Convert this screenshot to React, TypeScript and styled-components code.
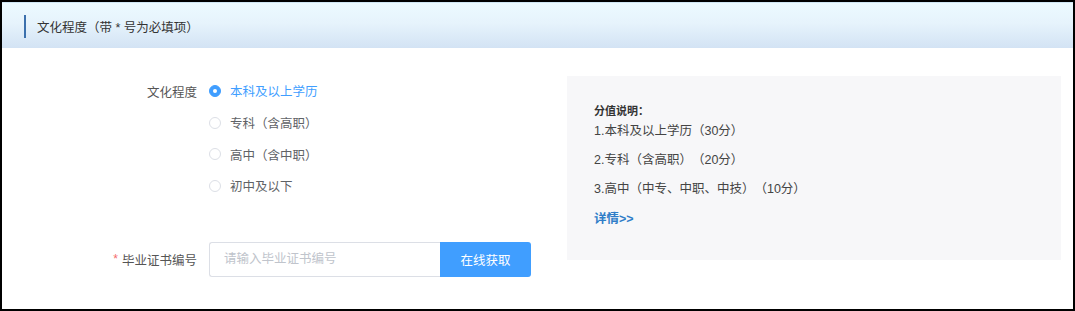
import styled, { createGlobalStyle } from "styled-components";

const GlobalStyle = createGlobalStyle`
  html, body {
    margin: 0;
    padding: 0;
    background: #ffffff;
  }
  * {
    box-sizing: border-box;
  }
  body {
    font-family: "Liberation Sans", "Noto Sans CJK SC", sans-serif;
    text-spacing-trim: space-all;
  }
`;

const options = ["本科及以上学历", "专科（含高职）", "高中（含中职）", "初中及以下"];

const scores = [
  "1.本科及以上学历（30分）",
  "2.专科（含高职）（20分）",
  "3.高中（中专、中职、中技）（10分）",
];

const App: React.FC = () => {
  const selected = 0;

  return (
    <>
      <GlobalStyle />
      <Frame>
        <Header>
          <Bar />
          <Title>文化程度（带 * 号为必填项）</Title>
        </Header>

        <Body>
          <Form>
            <Row>
              <Label>文化程度</Label>
              <RadioGroup>
                {options.map((text, i) => (
                  <RadioRow key={text}>
                    <Radio checked={i === selected} />
                    <RadioText checked={i === selected}>{text}</RadioText>
                  </RadioRow>
                ))}
              </RadioGroup>
            </Row>

            <InputRow>
              <Label>
                <Star>*</Star>毕业证书编号
              </Label>
              <Input placeholder="请输入毕业证书编号" />
              <Button>在线获取</Button>
            </InputRow>
          </Form>

          <Panel>
            <PanelTitle>分值说明：</PanelTitle>
            {scores.map((s) => (
              <PanelLine key={s}>{s}</PanelLine>
            ))}
            <More>详情&gt;&gt;</More>
          </Panel>
        </Body>
      </Frame>
    </>
  );
};

export default App;

interface CheckProps {
  checked: boolean;
}

const Frame = styled.div`
  width: 1075px;
  height: 311px;
  border: 2px solid #000;
  background: #fff;
  display: flex;
  flex-direction: column;
`;

const Header = styled.div`
  height: 46px;
  display: flex;
  align-items: center;
  padding-left: 22px;
  border-top: 1px solid #cfe6f4;
  background: linear-gradient(to bottom, #ecfaff 0%, #e6f3fc 45%, #d3e3f4 100%);
`;

const Bar = styled.div`
  width: 2px;
  height: 23px;
  margin-top: 2px;
  background: #3b70ad;
`;

const Title = styled.span`
  margin-left: 11px;
  margin-top: 1px;
  font-size: 12.5px;
  color: #333;
`;

const Body = styled.div`
  display: flex;
  padding-top: 27px;
`;

const Form = styled.div`
  width: 565px;
  padding-left: 95px;
`;

const Row = styled.div`
  display: flex;
  align-items: flex-start;
`;

const Label = styled.div`
  width: 100px;
  flex-shrink: 0;
  margin-right: 12px;
  height: 32px;
  display: flex;
  align-items: center;
  justify-content: flex-end;
  font-size: 12.5px;
  color: #555;
`;

const Star = styled.span`
  color: #f56c6c;
  margin-right: 4px;
  font-size: 12px;
`;

const RadioGroup = styled.div`
  display: flex;
  flex-direction: column;
`;

const RadioRow = styled.div`
  height: 31.7px;
  display: flex;
  align-items: center;
  cursor: pointer;
`;

const Radio = styled.span<CheckProps>`
  width: 12px;
  height: 12px;
  border-radius: 50%;
  border: 1px solid ${({ checked }) => (checked ? "#409eff" : "#dcdfe6")};
  background: ${({ checked }) => (checked ? "#409eff" : "#fff")};
  display: flex;
  align-items: center;
  justify-content: center;
  margin-right: 9px;

  &::after {
    content: "";
    width: 4px;
    height: 4px;
    border-radius: 50%;
    background: #fff;
    display: ${({ checked }) => (checked ? "block" : "none")};
  }
`;

const RadioText = styled.span<CheckProps>`
  font-size: 12.5px;
  color: ${({ checked }) => (checked ? "#409eff" : "#606266")};
`;

const InputRow = styled.div`
  display: flex;
  align-items: center;
  margin-top: 40px;
  height: 35px;

  ${Label} {
    height: 35px;
  }
`;

const Input = styled.input`
  width: 231px;
  height: 35px;
  border: 1px solid #dcdfe6;
  border-right: none;
  border-radius: 3px 0 0 3px;
  padding: 0 14px;
  font-size: 12.5px;
  font-family: inherit;
  color: #606266;
  outline: none;

  &::placeholder {
    color: #c0c4cc;
  }
`;

const Button = styled.button`
  width: 91px;
  height: 35px;
  border: none;
  border-radius: 0 3px 3px 0;
  background: #409eff;
  color: #fff;
  font-size: 12.5px;
  font-family: inherit;
  cursor: pointer;
`;

const Panel = styled.div`
  width: 494px;
  height: 184px;
  margin-top: 1px;
  padding: 26px 27px 0;
  background: #f7f7f9;
`;

const PanelTitle = styled.div`
  font-size: 11px;
  font-weight: bold;
  color: #333;
  line-height: 18px;
`;

const PanelLine = styled.div`
  font-size: 12.5px;
  color: #444;
  line-height: 29px;
  height: 29px;
  margin-top: -3px;
  margin-bottom: 3px;
`;

const More = styled.a`
  display: block;
  font-size: 12.5px;
  font-weight: bold;
  color: #2f7dc8;
  line-height: 29px;
  margin-top: -2px;
  cursor: pointer;
`;
